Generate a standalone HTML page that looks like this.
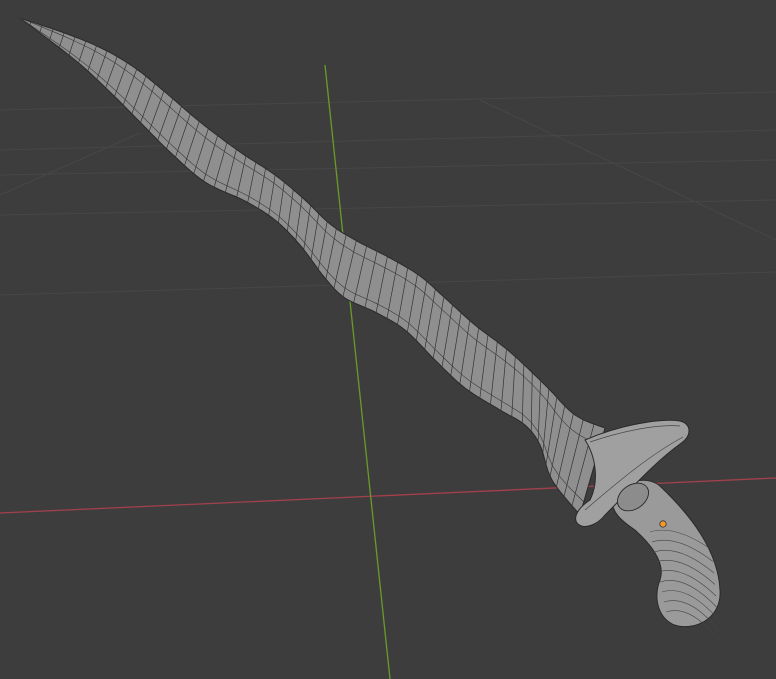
<!DOCTYPE html>
<html><head><meta charset="utf-8"><style>
html,body{margin:0;padding:0;background:#3d3d3d;width:776px;height:679px;overflow:hidden}
svg{display:block}
</style></head><body>
<svg id="s" width="776" height="679" viewBox="0 0 776 679" xmlns="http://www.w3.org/2000/svg">
<rect width="776" height="679" fill="#3d3d3d"/>
<g stroke="#474747" stroke-width="1" fill="none">
<line x1="0" y1="110" x2="776" y2="92"/>
<line x1="0" y1="150" x2="776" y2="130"/>
<line x1="0" y1="175" x2="776" y2="160"/>
<line x1="0" y1="215" x2="776" y2="200"/>
<line x1="0" y1="295" x2="776" y2="272"/>
<line x1="0" y1="195" x2="140" y2="133"/>
<line x1="480" y1="100" x2="776" y2="240"/>
</g>
<line x1="0" y1="513" x2="776" y2="478" stroke="#a3404c" stroke-width="1.3"/>
<line x1="325" y1="65" x2="390" y2="679" stroke="#6b9a2a" stroke-width="1.3"/>
<g id="m"></g>
<circle cx="663" cy="524" r="3.2" fill="#f39a2a" stroke="#333" stroke-width="0.8"/>
</svg>
<script>
var NS="http://www.w3.org/2000/svg",m=document.getElementById('m');
function el(t,a){var e=document.createElementNS(NS,t);for(var k in a)e.setAttribute(k,a[k]);m.appendChild(e);return e;}
var up0=[[20,18],[70,35],[105,50],[135,68],[165,92],[200,122],[240,152],[275,175],[305,200],[330,224],[355,240],[390,258],[420,276],[445,298],[475,325],[510,352],[545,385],[575,415],[605,428]];
var lo0=[[20,18],[75,60],[110,92],[140,122],[170,152],[205,182],[245,201],[275,220],[300,245],[325,278],[345,298],[375,312],[405,330],[435,360],[465,388],[500,410],[525,425],[540,445],[552,480],[580,515]];
function cr(a,n){var o=[];for(var i=0;i<a.length-1;i++){var p0=a[Math.max(i-1,0)],p1=a[i],p2=a[i+1],p3=a[Math.min(i+2,a.length-1)];for(var j=0;j<n;j++){var t=j/n,t2=t*t,t3=t2*t;o.push([0,1].map(function(k){return 0.5*((2*p1[k])+(-p0[k]+p2[k])*t+(2*p0[k]-5*p1[k]+4*p2[k]-p3[k])*t2+(-p0[k]+3*p1[k]-3*p2[k]+p3[k])*t3);}));}}o.push(a[a.length-1]);return o;}
var up=cr(up0,8),lo=cr(lo0,8);
function pts(a){return a.map(function(p){return p[0].toFixed(1)+','+p[1].toFixed(1)}).join(' ');}
// handle
el('path',{d:"M612,500 C625,478 650,475 662,488 C690,515 718,550 720,590 C722,615 700,630 678,626 C660,622 652,600 660,580 C665,565 655,548 635,530 C620,520 612,512 612,500Z",fill:"#9a9a9a",stroke:"#2a2a2a","stroke-width":"1"});
// blade
el('polygon',{points:pts(up.concat(lo.slice().reverse())),fill:"#8f8f8f",stroke:"#2a2a2a","stroke-width":"1"});
function samp(a,t){var L=[0];for(var i=1;i<a.length;i++)L.push(L[i-1]+Math.hypot(a[i][0]-a[i-1][0],a[i][1]-a[i-1][1]));var d=t*L[L.length-1];for(i=1;i<a.length;i++){if(L[i]>=d){var f=(d-L[i-1])/(L[i]-L[i-1]||1);return[a[i-1][0]+f*(a[i][0]-a[i-1][0]),a[i-1][1]+f*(a[i][1]-a[i-1][1])];}}return a[a.length-1];}
var N=62;
for(var i=1;i<N;i++){var t=i/N,p=samp(up,t),q=samp(lo,t);el('line',{x1:p[0],y1:p[1],x2:q[0],y2:q[1],stroke:"#333","stroke-width":"0.7"});}
[0.2,0.85].forEach(function(s){var arr=[];for(var i=0;i<=N;i++){var t=i/N,p=samp(up,t),q=samp(lo,t);arr.push([p[0]+(q[0]-p[0])*s,p[1]+(q[1]-p[1])*s]);}el('polyline',{points:pts(arr),fill:"none",stroke:"#3a3a3a","stroke-width":"0.6"});});
// guard
el('path',{d:"M585,440 C620,425 660,418 680,421 C692,424 692,436 680,444 C655,462 630,490 605,515 C598,524 585,530 578,524 C572,518 578,508 590,500 C600,480 595,455 585,440Z",fill:"#a0a0a0",stroke:"#2a2a2a","stroke-width":"1"});
el('path',{d:"M590,442 C625,430 660,424 680,426",fill:"none",stroke:"#444","stroke-width":"0.7"});
el('path',{d:"M585,510 C620,480 650,455 683,437",fill:"none",stroke:"#444","stroke-width":"0.7"});
el('ellipse',{cx:"633",cy:"497",rx:"17",ry:"12",transform:"rotate(-35 633 497)",fill:"#8c8c8c",stroke:"#2a2a2a","stroke-width":"0.9"});
for(var k=0;k<9;k++){var y=540+k*10;el('path',{d:"M"+(650+k*2)+","+(y-8)+" q25,-8 "+(62-k)+","+(18+k*1.5),fill:"none",stroke:"#444","stroke-width":"0.6"});}
</script>
</body></html>
